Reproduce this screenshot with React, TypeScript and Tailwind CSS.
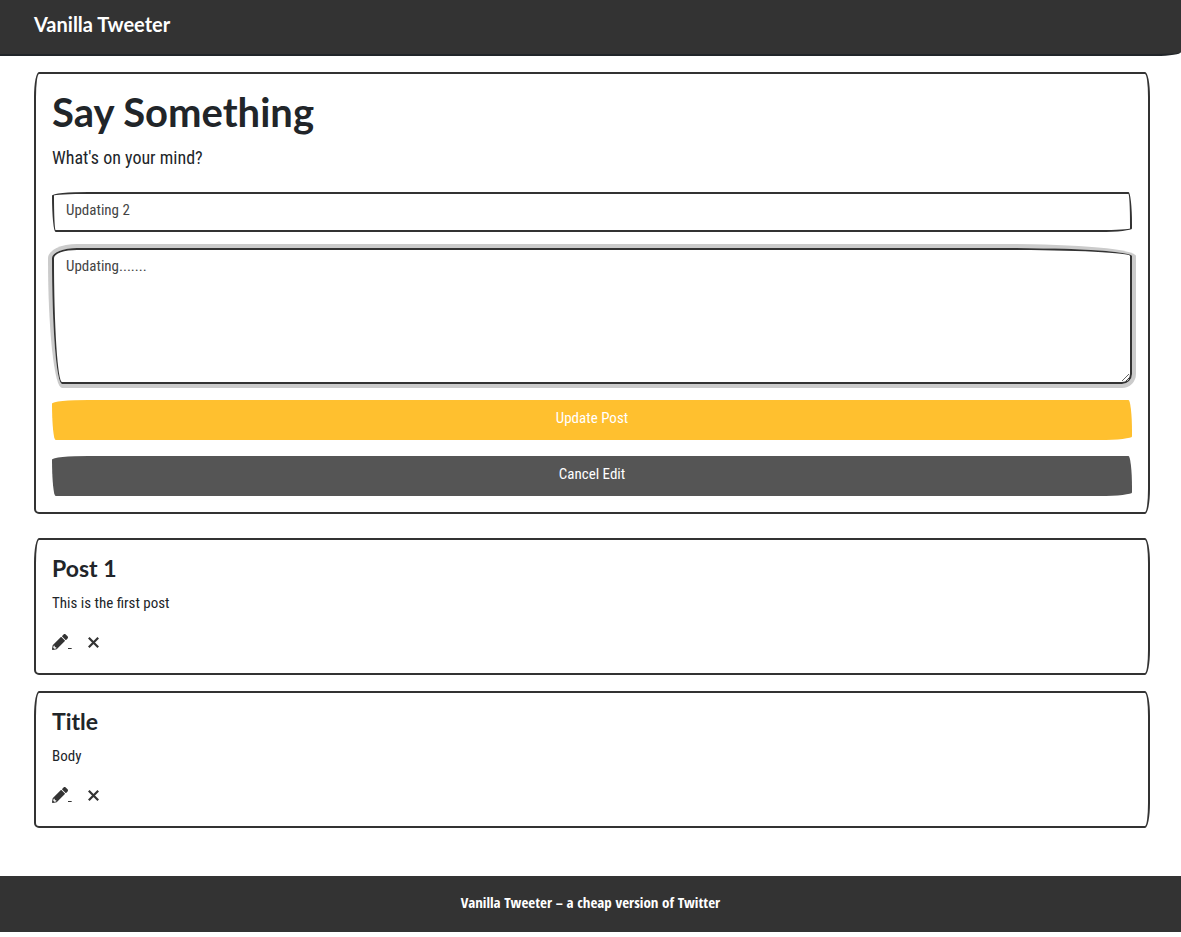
const posts = [
  { title: 'Post 1', body: 'This is the first post' },
  { title: 'Title', body: 'Body' },
];

const heading = "font-['Lato',sans-serif] font-bold";
const card =
  'border-2 border-[#333] bg-white [border-radius:5px_5px_5px_5px/25px_25px_25px_5px]';
const sketchy = '[border-radius:255px_25px_225px_25px/25px_225px_25px_255px]';

function PencilIcon() {
  return (
    <svg viewBox="0 0 512 512" className="size-4" fill="currentColor" aria-hidden="true">
      <path d="M497.9 142.1l-46.1 46.1c-4.7 4.7-12.3 4.7-17 0l-111-111c-4.7-4.7-4.7-12.3 0-17l46.1-46.1c18.7-18.7 49.1-18.7 67.9 0l60.1 60.1c18.8 18.7 18.8 49.1 0 67.9zM284.2 99.8L21.6 362.4.4 483.9c-2.9 16.4 11.4 30.6 27.8 27.8l121.5-21.3 262.6-262.6c4.7-4.7 4.7-12.3 0-17l-111-111c-4.8-4.7-12.4-4.7-17.1 0zM88 424h48v36.3l-64.5 11.3-31.1-31.1L51.7 376H88v48z" />
    </svg>
  );
}

function CrossIcon() {
  return (
    <svg viewBox="0 0 11 11" className="size-[11px]" fill="none" stroke="currentColor" strokeWidth="2.2" aria-hidden="true">
      <path d="M.8.8l9.4 9.4M10.2.8L.8 10.2" />
    </svg>
  );
}

function PostCard({ title, body }: { title: string; body: string }) {
  return (
    <article className={`${card} mb-4 px-4 pt-3.5 pb-5`}>
      <h4 className={`${heading} mb-2 text-[23px] leading-[29px]`}>{title}</h4>
      <p className="mb-4 leading-6">{body}</p>
      <div className="flex h-[22px] items-center">
        <a href="#edit" aria-label={`Edit ${title}`} className="flex items-center text-[#333] underline">
          <PencilIcon />
          <span aria-hidden="true" className="text-base whitespace-pre">{' '}</span>
        </a>
        <a href="#delete" aria-label={`Delete ${title}`} className="ml-4 text-[#333]">
          <CrossIcon />
        </a>
      </div>
    </article>
  );
}

export default function App() {
  return (
    <div className="bg-white font-['Roboto_Condensed','Noto_Sans_Condensed','Open_Sans_Condensed_Light','Lato',sans-serif] text-[15px] text-[#212529]">
      <nav className="mb-4 h-14 border-b-2 border-[#212529] bg-[#333] px-[34px] py-2 [border-radius:0_0_25px_0/0_0_4px_0]">
        <a href="#home" className={`${heading} text-xl leading-8 text-white`}>
          Vanilla Tweeter
        </a>
      </nav>

      <main className="pr-[31px] pl-[34px]">
        <form className={`${card} mb-6 px-4 pt-3.5 pb-4`} onSubmit={(e) => e.preventDefault()}>
          <h1 className={`${heading} mb-2 text-[40px] leading-12`}>Say Something</h1>
          <p className="mb-5 text-lg leading-7">What's on your mind?</p>
          <input
            aria-label="Post title"
            defaultValue="Updating 2"
            className={`${sketchy} mb-4 block h-10 w-full border-2 border-[#333] px-3 pb-1 text-[#444]`}
          />
          <textarea
            aria-label="Post body"
            defaultValue="Updating......."
            className="mb-4 block h-[136px] w-full resize border-2 border-[#333] px-3 py-1 leading-6 text-[#444] shadow-[0_0_0_4px_#cbcbcb] outline-none [border-radius:25px_125px_10px_10px/10px_8px_10px_125px]"
          />
          <button type="submit" className={`${sketchy} mb-4 block h-10 w-full bg-[#ffc02f] pb-1 text-white`}>
            Update Post
          </button>
          <button type="button" className={`${sketchy} block h-10 w-full bg-[#555] pb-1 text-white`}>
            Cancel Edit
          </button>
        </form>
        {posts.map((post) => (
          <PostCard key={post.title} {...post} />
        ))}
      </main>

      <footer className="mt-12 h-14 bg-[#333] py-3.5 text-center font-['Open_Sans_Condensed',sans-serif] leading-6 font-bold text-white">
        Vanilla Tweeter – a cheap version of Twitter
      </footer>
    </div>
  );
}
